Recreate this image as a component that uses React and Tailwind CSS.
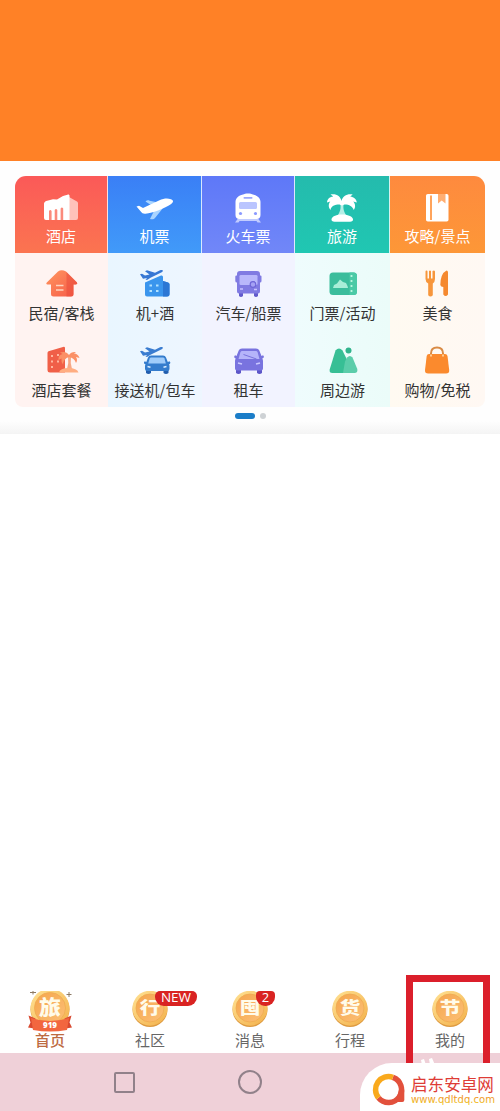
import React from 'react';

const HotelIcon = () => (
    <svg width="40" height="30" viewBox="0 0 40 30">
        <path d="M28 4l8 4.500a2 2 0 0 1 1 1.800V25a2 2 0 0 1-2 2h-9z" fill="#ffc2ba" />
        <path d="M3 11c0-1.500.8-2.500 2.200-3L12 6.200 16 6.500 22 3l4.500-1.300C28 1.400 28.500 2 28.500 3v24H5a2 2 0 0 1-2-2z" fill="#fff" />
        <path d="M8 27v-9q1.300-2 2.600 0v9zM13.700 27v-10q1.300-2 2.600 0v10zM19.600 27V15.500q1.300-2 2.600 0V27z" fill="#fb8a7c" />
    </svg>
);

const FlightIcon = () => (
    <svg width="40" height="30" viewBox="0 0 40 30">
        <path d="M10.500 8.500c2-1.500 3-1.200 4-.8L26 10l-7 4zM19 18l9-3-8 10c-1 1.500-3 1.500-5 1z" fill="#a9d4ff" />
        <path d="M1.500 13.500l2.500-.8 4 2.300 16-7.500c5-2.300 8.500-2.500 12-1.300 2.800 1 2.700 3-.2 5C30 15 18 20 10.500 20.800 8 21 7 20 6 18.800z" fill="#fff" />
    </svg>
);

const TrainIcon = () => (
    <svg width="40" height="30" viewBox="0 0 40 30">
        <path d="M10 25.500h20l3 4h-3.500l-1-1.500h-17l-1 1.500H7z" fill="#c2ccff" />
        <path d="M15 1.500C17 0 23 0 25 1.500c4.500.8 7.500 4 7.500 7.500v13c0 2.500-1.500 4-4 4h-17c-2.500 0-4-1.500-4-4V9c0-3.500 3-6.700 7.500-7.500z" fill="#fff" />
        <rect x="15.500" y="4" width="9" height="1.700" rx=".8" fill="#9aa6fb" />
        <rect x="11" y="9" width="18" height="7" rx="1.500" fill="#bac5ff" />
        <circle cx="12.500" cy="20.500" r="1.600" fill="#8b9aff" />
        <circle cx="27.500" cy="20.500" r="1.600" fill="#8b9aff" />
    </svg>
);

const PalmIcon = () => (
    <svg width="40" height="30" viewBox="0 0 40 30">
        <path d="M18 9h4c-1 5-1 8 2 13h-8c3-5 3-8 2-13z" fill="#b5efe6" />
        <path d="M19.500 8C18.500 3 14 .3 8.500 1.500c1 .8 2 1 2.800 2C7 4 5.200 6.500 5 9.500l3.300-1C6.500 10.500 6 14 8.500 17c.7-4 4-5.500 9-5.500l2.500 1 2.500-1c5 0 8 2 9.300 5.500 2.200-3 1.400-6.300-.6-8.500l3.600 1c-.3-3.500-2.800-5.500-6.600-6 1-1 1.500-1.200 2.500-2C25.500.3 20.500 3 19.500 8z" fill="#fff" />
        <path d="M9.500 26c1-3 5-4.500 10.500-4.500S30 23 31 26c.3 2-1 2.700-3 2.700H12.500c-2 0-3.300-.7-3-2.700z" fill="#fff" />
    </svg>
);

const GuideIcon = () => (
    <svg width="40" height="30" viewBox="0 0 40 30">
        <rect x="8" y="1" width="22.500" height="27.500" rx="1.800" fill="#fff" />
        <rect x="12" y="2.500" width="2" height="24.500" fill="#ffa45c" />
        <path d="M20 1h7.500v9.500L23.700 7.500 20 10.500z" fill="#ffae72" />
    </svg>
);

const HomestayIcon = () => (
    <svg width="40" height="30" viewBox="0 0 40 30">
        <defs>
            <linearGradient id="homestay" x2="1" y2="1">
                <stop stopColor="#ff965f" />
                <stop offset="1" stopColor="#f65a48" />
            </linearGradient>
        </defs>
        <path d="M16 2.500q3.500-2.500 8 0L35 13.500q1 1.500-1 2H31.500V25a2.500 2.500 0 0 1-2.500 2.500H11.500A2.500 2.500 0 0 1 9 25v-9.500H5.500q-2-.5-.7-2z" fill="url(#homestay)" />
        <path d="M24.500 3L35 13.500q1 1.500-1 2H31.500V25a2.500 2.500 0 0 1-2.500 2.500H24.500z" fill="#e94c3d" opacity=".55" />
        <path d="M14 16.500h7.500M14 21h7.500" stroke="#ffd3bd" strokeWidth="1.500" />
    </svg>
);

const SmallPlane = ({ fill }) => (
    <path d="M5 5.200l2-.5 3 1.700 4.500-1L10 2.200l2-1 8 2.500L25 1.300c3-1 4 .6 1.700 2L15.500 8.800l-3 2-2 .3 1.500-2-4 .6z" fill={fill} />
);

const FlightHotelIcon = () => (
    <svg width="40" height="30" viewBox="0 0 40 30">
        <SmallPlane fill="#3677d4" />
        <path d="M10 13.500L26 6.500q2-.5 2 1.500V12l5 1.500q1.500.5 1.500 2V25a2.500 2.500 0 0 1-2.500 2.500H12a2 2 0 0 1-2-2z" fill="#3a95ed" />
        <path d="M28 12l5 1.500q1.500.5 1.500 2V25a2.500 2.500 0 0 1-2.500 2.500h-4z" fill="#2c77d4" />
        <path d="M14.500 16.500h2.500M21 16.500h2.500M14.500 22h2.500M21 22h2.500" stroke="#b2e2ff" strokeWidth="2.200" />
    </svg>
);

const BusIcon = () => (
    <svg width="40" height="30" viewBox="0 0 40 30">
        <path d="M10 23h4v4q-2 2-4 0zM25 23h4v4q-2 2-4 0z" fill="#625acb" />
        <path d="M11 2h17q3 0 3 3v1.500h.5q1 0 1 1V12q0 1.500-1.500 1.500v9q0 2-2 2h-19q-2 0-2-2v-9q-1.700 0-1.700-1.500V7.500q0-1 1.200-1H8V5q0-3 3-3z" fill="#807ae2" />
        <rect x="10.500" y="6" width="18" height="10" rx="1.300" fill="#b9b7fb" />
        <circle cx="24" cy="15.500" r="2.800" fill="#a5a1f4" stroke="#6e65d8" strokeWidth="1.200" />
        <path d="M11 20h3M25 20.500h3" stroke="#c6c1ff" strokeWidth="1.500" />
    </svg>
);

const TicketIcon = () => (
    <svg width="40" height="30" viewBox="0 0 40 30">
        <rect x="6.500" y="3.500" width="27.500" height="22.500" rx="3.500" fill="#3bbd9c" />
        <path d="M26.500 3.500h4q3.500 0 3.500 3.500v15.500q0 3.500-3.500 3.500h-4z" fill="#4bcaa6" />
        <path d="M28.500 6v18" stroke="#b8f6df" strokeWidth="1.800" strokeDasharray="2 3" />
        <path d="M10 19l1-3 3-1.500 3-4 3 2.500 3 1 1.500 3 .5 2z" fill="#a9eed8" />
    </svg>
);

const FoodIcon = () => (
    <svg width="40" height="30" viewBox="0 0 40 30">
        <path d="M8.500 1.500q1 0 1 1v7h1.500V2q1-1 2 0v7.500h1.500V2q2-1 2.500.5V10q0 3-2.200 4.500v11.700q-2.300 2.800-4.600 0V14.500Q7.500 13 7.500 10V2.500q0-1 1-1z" fill="#f7963b" />
        <path d="M28.500 1.500q1.500 0 1.500 2V25.500q-2.300 3-4.700 0V18q-2.500 0-3-2Q22.500 4.500 28.500 1.500z" fill="#f5892f" />
    </svg>
);

const PackageIcon = () => (
    <svg width="40" height="30" viewBox="0 0 40 30">
        <path d="M5.500 7q0-1.200 1-1.700L21 .9q2-.5 2 1.200V26.500H8q-2.500 0-2.500-2.500z" fill="#f05f48" />
        <path d="M9 10h2M15 9h2M9 15.500h2M15 15.500h2M9 21h2" stroke="#ffb7a0" strokeWidth="2" />
        <path d="M26 11h3q-1 6 1 12h-5q2-6 1-12z" fill="#f7a684" />
        <path d="M27 9q-3-4.500-9-2.500l2.500 1.500q-4.500 1-4 6l3-1.500q-.5 4 1.500 6 .5-6 6-7.500 5.500 1 7 6 2-3 0-6l3.500 1q-1.500-4.500-5.500-4.500l2-1.500q-5-.5-7 3z" fill="#fb9066" />
        <path d="M17 26.500q1-4.500 9.500-4.500t10 4.500z" fill="#ffad82" />
    </svg>
);

const TransferIcon = () => (
    <svg width="40" height="30" viewBox="0 0 40 30">
        <SmallPlane fill="#3a7cd0" />
        <path d="M11 23h5v4q-2.500 2-5 0zM28.500 23h5v4q-2.500 2-5 0z" fill="#225eae" />
        <path d="M16 9.500h12q2.300 0 3 2l1.800 4.500 1.700-.8q1.500 1 .5 2.500l-1 .6q.5.700.5 2V23q0 2-2 2H12q-2 0-2-2v-2.700q0-1.300.5-2l-1.500-.8q-.5-1.500.8-2.300l1.500.8L13 11.500q.7-2 3-2z" fill="#347ccd" />
        <path d="M16 11.500h12q1 0 1.500 1l1.300 5H13.200l1.500-5q.3-1 1.300-1z" fill="#a0ccfa" />
        <path d="M12.500 20.500l3 .7M31.500 20.500l-3 .7" stroke="#d9ecff" strokeWidth="1.500" />
    </svg>
);

const RentIcon = () => (
    <svg width="40" height="30" viewBox="0 0 40 30">
        <path d="M7 21h5v6q-2.500 2-5 0zM28 21h5v6q-2.500 2-5 0z" fill="#5d56c8" />
        <path d="M13 2.500h14q2.500 0 3.300 2L32.500 10l1.500-.7q1.500 1 .5 2.500l-1.200.6q.7 1 .7 2.600v7.500q0 2-2 2h-24q-2 0-2-2V15q0-1.600.7-2.600l-1.200-.6q-.8-1.500.6-2.500L7.500 10l2.200-5.500q.8-2 3.300-2z" fill="#7973df" />
        <path d="M13 5h14q1 0 1.500 1l2 7h-21l2-7q.5-1 1.500-1z" fill="#b5b4fa" />
        <path d="M14.500 8.500l13 4.500" stroke="#7872dc" strokeWidth="1" />
        <path d="M9 17l4 1M31 17l-4 1" stroke="#cac8ff" strokeWidth="1.700" />
    </svg>
);

const NearbyIcon = () => (
    <svg width="40" height="30" viewBox="0 0 40 30">
        <circle cx="25.500" cy="4.500" r="3" fill="#31b48d" />
        <path d="M12.500 4.500q3.500-4 7 0L29 24q.5 3-2.500 3H9.500q-3.500 0-2.800-3.500z" fill="#37bf95" />
        <path d="M24 11.500q3-3 5.500 0l4.800 11.500q.7 4-2.800 4H20L22 15.500z" fill="#5bcdaa" />
    </svg>
);

const ShopIcon = () => (
    <svg width="40" height="30" viewBox="0 0 40 30">
        <path d="M13 10V7.500q0-6 6-6t6 6V10" fill="none" stroke="#d98b45" strokeWidth="2" />
        <path d="M11 8h16q2 0 2.500 2l1.700 14q.3 3.500-3.200 3.500H10.200q-3.500 0-3.200-3.500L8.700 10q.3-2 2.300-2z" fill="#fb8a2d" />
        <path d="M13 8.500v2M25 8.500v2" stroke="#ffd5a0" strokeWidth="1.800" />
    </svg>
);

const columns = [
    {
        head: 'bg-gradient-to-b from-[#fb5958] to-[#fb7450] border-r',
        body: 'bg-[#fff3f1]',
        items: [['酒店', HotelIcon], ['民宿/客栈', HomestayIcon], ['酒店套餐', PackageIcon]],
    },
    {
        head: 'bg-gradient-to-b from-[#3a7ff6] to-[#419af9] border-r',
        body: 'bg-gradient-to-r from-[#e9f6ff] to-[#eef6ff]',
        items: [['机票', FlightIcon], ['机+酒', FlightHotelIcon], ['接送机/包车', TransferIcon]],
    },
    {
        head: 'bg-gradient-to-b from-[#5e78f8] to-[#7187f8] border-r',
        body: 'bg-[#f2f3ff]',
        items: [['火车票', TrainIcon], ['汽车/船票', BusIcon], ['租车', RentIcon]],
    },
    {
        head: 'bg-gradient-to-b from-[#24bbad] to-[#20c7b2] border-r',
        body: 'bg-gradient-to-r from-[#effcfd] to-[#ebfcf9]',
        items: [['旅游', PalmIcon], ['门票/活动', TicketIcon], ['周边游', NearbyIcon]],
    },
    {
        head: 'bg-gradient-to-b from-[#fe8a3e] to-[#fd9737]',
        body: 'bg-gradient-to-r from-[#fffaf1] to-[#fff8f3]',
        items: [['攻略/景点', GuideIcon], ['美食', FoodIcon], ['购物/免税', ShopIcon]],
    },
];

const Category = ({ column }) => {
    const [[title, TopIcon], ...rest] = column.items;

    return (
        <div className="flex flex-col">
            <div className={`flex h-[77px] flex-col items-center border-white/80 pt-[17px] text-white ${column.head}`}>
                <div className="h-[30px]"><TopIcon /></div>
                <span className="mt-[3px] text-[15px] leading-5 whitespace-nowrap">{title}</span>
            </div>
            <div className={`flex h-[154px] flex-col ${column.body}`}>
                {rest.map(([label, Icon]) => (
                    <div key={label} className="flex h-[77px] flex-col items-center pt-4">
                        <div className="h-[30px]"><Icon /></div>
                        <span className="mt-1 text-[15px] leading-5 whitespace-nowrap text-[#333]">{label}</span>
                    </div>
                ))}
            </div>
        </div>
    );
};

const tabs = [
    { label: '首页', char: '旅', active: true },
    { label: '社区', char: '行', badge: 'NEW' },
    { label: '消息', char: '囤', badge: '2' },
    { label: '行程', char: '货' },
    { label: '我的', char: '节' },
];

const Coin = ({ char, active }) => (
    <svg width="48" height="42" viewBox="0 0 48 42">
        <defs>
            <linearGradient id="coinRim" x2="1" y2="1">
                <stop stopColor="#ffe294" />
                <stop offset="1" stopColor="#f3b04a" />
            </linearGradient>
            <linearGradient id="coinFace" x2="1" y2="1">
                <stop stopColor="#f5a54c" />
                <stop offset="1" stopColor="#fcc077" />
            </linearGradient>
        </defs>
        <circle cx="24" cy="18.500" r={active ? 19.5 : 17.5} fill="#dd9a40" />
        <circle cx="24" cy="17.200" r={active ? 19.5 : 17.5} fill="url(#coinRim)" />
        <circle cx="24" cy="17" r={active ? 15.5 : 14} fill="url(#coinFace)" stroke="#efab50" strokeWidth=".8" />
        <text
            transform={active ? 'translate(24 24) scale(1.100 1)' : 'translate(24 23) scale(1.250 1)'}
            textAnchor="middle"
            fontSize={active ? 20 : 16.5}
            fontWeight="900"
            fill="#fffbea"
        >
            {char}
        </text>
        {active && (
            <g>
                <path d="M2.500 24.500l7 3-1 10-6.500-1 2.500-5zM45.500 24.500l-7 3 1 10 6.500-1-2.500-5z" fill="#d94a30" />
                <path d="M5 27q19 6 38 0l-2 12q-17 3-34 0z" fill="#f2663f" />
                <text x="24" y="37" textAnchor="middle" textLength="14" lengthAdjust="spacingAndGlyphs" fontFamily="Open Sans" fontSize="8" fontWeight="800" fill="#fff">919</text>
                <path d="M4 1.500h6M7 0v3.500M40.500 3.500h5M43 1v5" stroke="#8d7a65" strokeWidth="1" />
            </g>
        )}
    </svg>
);

const TabBar = () => (
    <nav className="grid h-[62px] grid-cols-5">
        {tabs.map((tab) => (
            <div key={tab.label} className="relative flex flex-col items-center">
                <div className="h-[39px]"><Coin char={tab.char} active={tab.active} /></div>
                <span className={`text-[15px] leading-5 ${tab.active ? 'z-10 font-medium text-[#bd6b42]' : 'text-[#666]'}`}>
                    {tab.label}
                </span>
                {tab.badge === 'NEW' && (
                    <span className="absolute top-0 left-[55px] h-[15px] w-[42px] rounded-t-[5px] rounded-b-[9px] bg-[#d92322] text-center font-['Open_Sans'] text-[13.500px] leading-[12px] text-white">NEW</span>
                )}
                {tab.badge === '2' && (
                    <span className="absolute top-0 left-[56px] h-[15px] w-[19px] rounded-t-[4px] rounded-b-[9px] bg-[#d92322] text-center font-['Open_Sans'] text-[13px] leading-[12px] text-white">2</span>
                )}
            </div>
        ))}
    </nav>
);

const Watermark = () => (
    <div className="absolute right-0 bottom-0 flex h-12 w-[140px] rounded-tl-[32px] bg-white pl-[12px]">
        <svg className="mt-[8px]" width="34" height="36" viewBox="0 0 34 36">
            <path d="M20.900 6.300A13 13 0 1 1 6.500 26.800" fill="none" stroke="#e2503c" strokeWidth="5.500" />
            <path d="M6.500 26.800A13 13 0 0 1 20.900 6.300" fill="none" stroke="#f9a91c" strokeWidth="5.500" />
            <path d="M27 18.500h5.300V29q0 2-2 2H24z" fill="#e2503c" />
        </svg>
        <div className="ml-[5px] flex flex-col pt-[12px] whitespace-nowrap">
            <span className="text-[16.600px] leading-[18px] text-[#de3c36]">启东安卓网</span>
            <svg width="85" height="18" viewBox="0 0 85 18" className="shrink-0 overflow-visible">
                <defs>
                    <linearGradient id="siteUrl" x2="0" y2="1">
                        <stop stopColor="#f07f22" />
                        <stop offset="1" stopColor="#efc51b" />
                    </linearGradient>
                </defs>
                <text x="0" y="9.500" textLength="84" lengthAdjust="spacingAndGlyphs" fontFamily="DejaVu Sans" fontSize="10" fill="url(#siteUrl)">www.qdltdq.com</text>
            </svg>
        </div>
    </div>
);

export default function App() {
    return (
        <div className="relative flex h-[1111px] w-[500px] flex-col overflow-hidden bg-white font-['Noto_Sans_CJK_SC',sans-serif]">
            <header className="h-[161px] shrink-0 bg-[#ff8126]" />

            <section className="h-[273px] shrink-0 bg-[#fefefe] px-[15px] pt-[15px]">
                <div className="grid grid-cols-[93px_94px_93px_95px_95px] overflow-hidden rounded-t-[11px] rounded-b-lg">
                    {columns.map((column) => (
                        <Category key={column.items[0][0]} column={column} />
                    ))}
                </div>
                <div className="mt-[6px] flex h-[6px] items-center justify-center gap-[5px]">
                    <span className="h-[6px] w-5 rounded-full bg-[#1b7dc8]" />
                    <span className="h-[6px] w-[6px] rounded-full bg-[#ced2d5]" />
                </div>
                <div className="-mx-[15px] mt-[2px] h-[13px] bg-gradient-to-b from-[#fefefe] to-[#f4f4f4]" />
            </section>

            <main className="flex-1" />

            <TabBar />

            <footer className="flex h-[58px] shrink-0 items-center gap-[103px] bg-[#efd0d8] pl-[114px]">
                <span className="h-[21px] w-[21px] rounded-[2px] border-2 border-[#91818a]" />
                <span className="h-6 w-6 rounded-full border-2 border-[#91818a]" />
            </footer>

            <div className="absolute top-[975px] left-[406px] h-[110px] w-[84px] border-[7px] border-[#db1f2b]" />
            <svg className="absolute top-[1057px] left-[419px]" width="18" height="8" viewBox="0 0 18 8">
                <path d="M2 3l3-1 2 6H3zM10 2l3-1 3 7h-5z" fill="#fff" />
            </svg>
            <Watermark />
        </div>
    );
}
